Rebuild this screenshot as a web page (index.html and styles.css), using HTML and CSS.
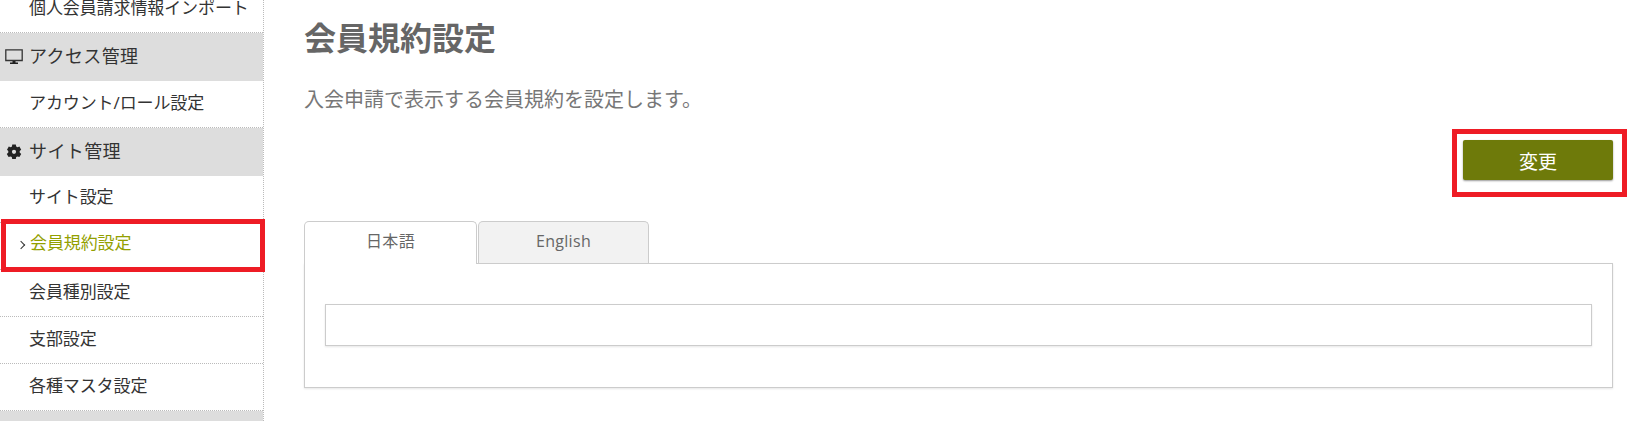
FILE: index.html
```html
<!DOCTYPE html>
<html lang="ja">
<head>
<meta charset="utf-8">
<title>会員規約設定</title>
<link rel="stylesheet" href="styles.css">
</head>
<body>
<div class="layout">
  <aside class="sidebar">
    <ul class="nav">
      <li class="item">個人会員請求情報インポート</li>
      <li class="head">
        <svg class="ico" viewBox="0 0 18 16"><path d="M.8.8h16.400v10.700H.8z" fill="none" stroke="#333" stroke-width="1.3"/><path d="M7.500 12h3v1.600h2.500V15H5v-1.400h2.500z" fill="#222"/></svg>
        アクセス管理
      </li>
      <li class="item">アカウント/ロール設定</li>
      <li class="head">
        <svg class="ico gear" viewBox="0 0 18 16"><path fill="#222" fill-rule="evenodd" d="M7.200.6h3.600l.4 1.900 1.300.7 1.900-.6 1.800 3.100-1.500 1.300v1.600l1.500 1.300-1.800 3.100-1.900-.6-1.300.7-.4 1.900H7.200l-.4-1.900-1.300-.7-1.900.6-1.800-3.100 1.500-1.300V7L2 5.700l1.800-3.100 1.900.6L7 2.500zM9 5.700a2.100 2.100 0 1 0 0 4.200 2.100 2.100 0 0 0 0-4.200z"/></svg>
        サイト管理
      </li>
      <li class="item site">サイト設定</li>
      <li class="item current">会員規約設定</li>
      <li class="item">会員種別設定</li>
      <li class="item">支部設定</li>
      <li class="item">各種マスタ設定</li>
      <li class="head tail"></li>
    </ul>
    <div class="mark mark-nav"></div>
  </aside>
  <main class="main">
    <h1 class="title">会員規約設定</h1>
    <p class="lead">入会申請で表示する会員規約を設定します。</p>
    <div class="actions">
      <button class="btn" type="button">変更</button>
      <div class="mark mark-btn"></div>
    </div>
    <div class="tabs">
      <div class="tab active">日本語</div>
      <div class="tab">English</div>
    </div>
    <div class="panel">
      <div class="field"></div>
    </div>
  </main>
</div>
</body>
</html>
```
FILE: styles.css
```css
* { box-sizing: border-box; }
html, body { margin: 0; height: 421px; overflow: hidden; background: #fff; }
body {
  font-family: "Open Sans", "Noto Sans CJK JP", sans-serif;
  color: #333;
}
.layout { display: flex; height: 421px; }
.sidebar {
  position: relative;
  flex: 0 0 264px;
  border-right: 1px dotted #bbb;
}
.nav { list-style: none; margin: -14px 0 0; padding: 0; }
.item, .head {
  display: flex;
  align-items: center;
  padding-left: 29px;
  color: #333;
  position: relative;
}
.item { height: 47px; font-size: 17px; letter-spacing: -0.1px; padding-bottom: 6px; border-bottom: 1px dotted #bbb; }
.head { height: 48px; font-size: 18px; letter-spacing: 0.4px; padding-bottom: 4px; background: #ddd; }
.tail { height: 10px; padding-bottom: 0; }
.site { padding-bottom: 8px; }
.ico { position: absolute; left: 5px; top: 16px; width: 18px; height: 16px; }
.current { color: #93a000; padding: 0 0 10px 30px; }
.current::before {
  content: "";
  position: absolute;
  left: 18px;
  top: 19px;
  width: 5px;
  height: 5px;
  border-top: 1px solid #333;
  border-right: 1px solid #333;
  transform: rotate(45deg);
}
.mark { position: absolute; border: 5px solid #ee1c25; }
.mark-nav { left: 1px; top: 219px; width: 264px; height: 53px; }
.main { flex: 1; padding: 0 20px 0 40px; min-width: 0; }
.title {
  margin: 16px 0 0;
  font-size: 32px;
  line-height: 44px;
  font-weight: 700;
  color: #666;
}
.lead {
  margin: 25px 0 0;
  font-size: 20px;
  line-height: 30px;
  color: #777;
}
.actions { position: relative; display: flex; justify-content: flex-end; margin-top: 25px; }
.btn {
  width: 150px;
  height: 40px;
  border: 0;
  border-radius: 2px;
  background: #6e7a0a;
  color: #fff;
  font: 400 19px "Noto Sans CJK JP", sans-serif;
  box-shadow: 0 1px 2px rgba(0,0,0,.4);
}
.mark-btn { right: -14px; top: -11px; width: 175px; height: 68px; }
.tabs { display: flex; gap: 1px; margin-top: 41px; position: relative; z-index: 1; }
.tab {
  width: 171px;
  height: 42px;
  border: 1px solid #ccc;
  border-bottom: 0;
  border-radius: 5px 5px 0 0;
  background: #f2f2f2;
  color: #666;
  font-size: 16px;
  letter-spacing: 0.3px;
  line-height: 38px;
  text-align: center;
}
.tab.active { width: 173px; background: #fff; height: 43px; margin-bottom: -1px; }
.panel {
  height: 125px;
  border: 1px solid #ccc;
  padding: 40px 20px 0;
  box-shadow: 0 1px 2px rgba(0,0,0,.1);
}
.field {
  height: 42px;
  border: 1px solid #ccc;
  box-shadow: 0 1px 2px rgba(0,0,0,.1);
}
```
